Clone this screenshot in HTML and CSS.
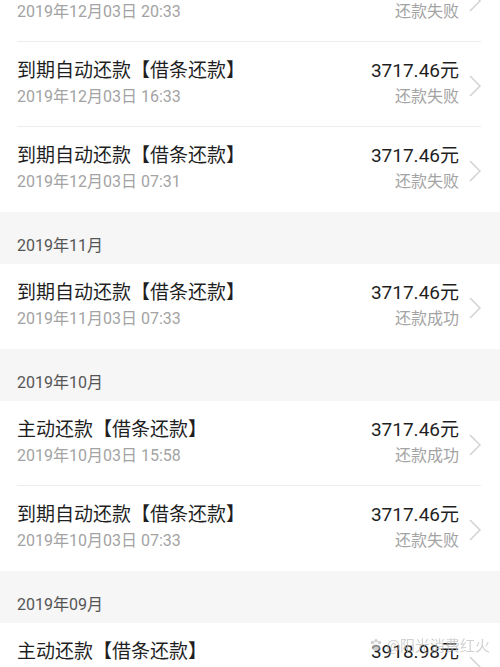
FILE: index.html
```html
<!DOCTYPE html>
<html lang="zh-CN">
<head>
  <meta charset="UTF-8">
  <title>还款记录</title>
  <link rel="stylesheet" href="styles.css">
</head>
<body>
  <div class="records">
    <section class="group">
      <div class="row">
        <div class="info">
          <div class="title">到期自动还款【借条还款】</div>
          <div class="date">2019年12月03日 20:33</div>
        </div>
        <div class="money">
          <div class="amount">3717.46元</div>
          <div class="status">还款失败</div>
        </div>
        <svg class="chevron" viewBox="0 0 12 22"><path d="M1 1 L11 11 L1 21" /></svg>
      </div>
      <div class="row">
        <div class="info">
          <div class="title">到期自动还款【借条还款】</div>
          <div class="date">2019年12月03日 16:33</div>
        </div>
        <div class="money">
          <div class="amount">3717.46元</div>
          <div class="status">还款失败</div>
        </div>
        <svg class="chevron" viewBox="0 0 12 22"><path d="M1 1 L11 11 L1 21" /></svg>
      </div>
      <div class="row">
        <div class="info">
          <div class="title">到期自动还款【借条还款】</div>
          <div class="date">2019年12月03日 07:31</div>
        </div>
        <div class="money">
          <div class="amount">3717.46元</div>
          <div class="status">还款失败</div>
        </div>
        <svg class="chevron" viewBox="0 0 12 22"><path d="M1 1 L11 11 L1 21" /></svg>
      </div>
    </section>

    <div class="month">2019年11月</div>
    <section class="group">
      <div class="row">
        <div class="info">
          <div class="title">到期自动还款【借条还款】</div>
          <div class="date">2019年11月03日 07:33</div>
        </div>
        <div class="money">
          <div class="amount">3717.46元</div>
          <div class="status">还款成功</div>
        </div>
        <svg class="chevron" viewBox="0 0 12 22"><path d="M1 1 L11 11 L1 21" /></svg>
      </div>
    </section>

    <div class="month">2019年10月</div>
    <section class="group">
      <div class="row">
        <div class="info">
          <div class="title">主动还款【借条还款】</div>
          <div class="date">2019年10月03日 15:58</div>
        </div>
        <div class="money">
          <div class="amount">3717.46元</div>
          <div class="status">还款成功</div>
        </div>
        <svg class="chevron" viewBox="0 0 12 22"><path d="M1 1 L11 11 L1 21" /></svg>
      </div>
      <div class="row">
        <div class="info">
          <div class="title">到期自动还款【借条还款】</div>
          <div class="date">2019年10月03日 07:33</div>
        </div>
        <div class="money">
          <div class="amount">3717.46元</div>
          <div class="status">还款失败</div>
        </div>
        <svg class="chevron" viewBox="0 0 12 22"><path d="M1 1 L11 11 L1 21" /></svg>
      </div>
    </section>

    <div class="month">2019年09月</div>
    <section class="group">
      <div class="row">
        <div class="info">
          <div class="title">主动还款【借条还款】</div>
          <div class="date">2019年09月03日 15:58</div>
        </div>
        <div class="money">
          <div class="amount">3918.98元</div>
          <div class="status">还款成功</div>
        </div>
        <svg class="chevron" viewBox="0 0 12 22"><path d="M1 1 L11 11 L1 21" /></svg>
      </div>
    </section>
  </div>

  <!-- baidu-style watermark over the last row -->
  <div class="watermark">
    <svg class="paw" viewBox="0 0 16 16">
      <circle cx="4" cy="5" r="2" />
      <circle cx="8" cy="3" r="2" />
      <circle cx="12" cy="5" r="2" />
      <ellipse cx="8" cy="11" rx="4.5" ry="3.5" />
    </svg>
    <span>@阳光消费红火</span>
  </div>
</body>
</html>
```

FILE: styles.css
```css
html, body {
  margin: 0;
  height: 667px;
  overflow: hidden;
}
body {
  font-family: Roboto, "Noto Sans CJK SC", sans-serif;
  background: #fff;
  color: #222;
}
.records {
  margin-top: -43px;
}
.row {
  display: flex;
  align-items: center;
  margin: 0 19px 0 17px;
  padding: 16px 0;
  height: 52px;
  border-bottom: 1px solid #ececec;
}
.row:last-child {
  border-bottom-color: transparent;
}
.info {
  flex: 1;
}
.title, .amount {
  font-size: 19px;
  line-height: 26px;
  color: #1f1f1f;
}
.date, .status {
  font-size: 16px;
  line-height: 26px;
  color: #a3a3a3;
}
.money {
  text-align: right;
}
.chevron {
  width: 12px;
  height: 22px;
  margin: 4px 0 0 10px;
  fill: none;
  stroke: #d2d2d2;
  stroke-width: 1.5;
}
.month {
  background: #f6f6f6;
  padding: 23px 17px 7px;
  height: 22px;
  font-size: 16px;
  line-height: 22px;
  color: #555;
}
.watermark {
  position: fixed;
  right: 10px;
  bottom: 12px;
  display: flex;
  align-items: center;
  gap: 4px;
  font-size: 15px;
  color: rgba(185, 185, 185, 0.65);
}
.paw {
  width: 14px;
  height: 14px;
  fill: rgba(185, 185, 185, 0.65);
}
```
